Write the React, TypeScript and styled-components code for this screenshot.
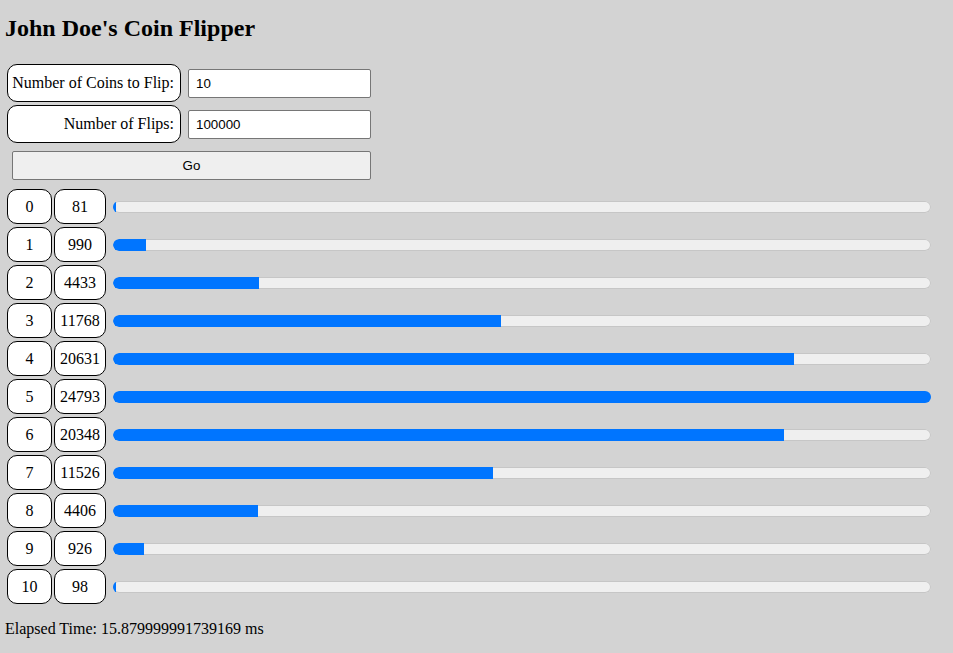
import React from "react";
import styled, { createGlobalStyle } from "styled-components";

const Global = createGlobalStyle`
  html, body { margin: 0; padding: 0; background: #d3d3d3; }
  body { font-family: "Liberation Serif", "Times New Roman", serif; color: #000; }
`;

const Page = styled.div`
  padding: 0 5px;
`;

const Title = styled.h2`
  margin: 14px 0 22px 0;
  font-size: 24px;
  line-height: 28px;
  font-weight: bold;
`;

const Form = styled.div`
  display: flex;
  flex-direction: column;
  gap: 3px;
  padding-left: 2px;
`;

const FormRow = styled.div`
  display: flex;
  align-items: center;
  gap: 7px;
`;

const FieldLabel = styled.label`
  box-sizing: border-box;
  width: 174px;
  height: 38px;
  display: flex;
  align-items: center;
  justify-content: flex-end;
  padding: 0 6px;
  background: #fff;
  border: 1px solid #000;
  border-radius: 10px;
  font-size: 16px;
  white-space: nowrap;
`;

const Input = styled.input`
  box-sizing: border-box;
  width: 183px;
  height: 29px;
  padding: 0 7px;
  border: 1px solid #767676;
  border-radius: 2px;
  background: #fff;
  font-family: "Liberation Sans", Arial, sans-serif;
  font-size: 13.33px;
  color: #000;
`;

const GoButton = styled.button`
  display: block;
  box-sizing: border-box;
  margin: 8px 0 0 7px;
  width: 359px;
  height: 29px;
  background: #efefef;
  border: 1px solid #767676;
  border-radius: 2px;
  font-family: "Liberation Sans", Arial, sans-serif;
  font-size: 13.33px;
  color: #000;
`;

const Results = styled.div`
  margin-top: 9px;
  padding-left: 2px;
  display: flex;
  flex-direction: column;
  gap: 3px;
`;

const ResultRow = styled.div`
  display: flex;
  align-items: center;
  gap: 2px;
`;

const Cell = styled.div<{ $w: number }>`
  box-sizing: border-box;
  width: ${(p) => p.$w}px;
  height: 35px;
  display: flex;
  align-items: center;
  justify-content: center;
  background: #fff;
  border: 1px solid #000;
  border-radius: 10px;
  font-size: 16px;
`;

const Track = styled.div`
  margin-left: 5px;
  width: 818px;
  height: 12px;
  background: #efefef;
  box-shadow: inset 0 0 0 1px #c6c6c6;
  border-radius: 6px;
  overflow: hidden;
  display: flex;
`;

const Fill = styled.div`
  height: 100%;
  background: #0075ff;
  border-radius: 6px 0 0 6px;
`;

const Elapsed = styled.div`
  margin-top: 16px;
  font-size: 16px;
  line-height: 18px;
`;

const counts = [81, 990, 4433, 11768, 20631, 24793, 20348, 11526, 4406, 926, 98];
const max = Math.max(...counts);

export default function App() {
  return (
    <>
      <Global />
      <Page>
        <Title>John Doe's Coin Flipper</Title>
        <Form>
          <FormRow>
            <FieldLabel htmlFor="coins">Number of Coins to Flip:</FieldLabel>
            <Input id="coins" defaultValue="10" />
          </FormRow>
          <FormRow>
            <FieldLabel htmlFor="flips">Number of Flips:</FieldLabel>
            <Input id="flips" defaultValue="100000" />
          </FormRow>
        </Form>
        <GoButton>Go</GoButton>
        <Results>
          {counts.map((c, i) => (
            <ResultRow key={i}>
              <Cell $w={45}>{i}</Cell>
              <Cell $w={52}>{c}</Cell>
              <Track>
                <Fill style={{ width: `${(c / max) * 100}%` }} />
              </Track>
            </ResultRow>
          ))}
        </Results>
        <Elapsed>Elapsed Time: 15.879999991739169 ms</Elapsed>
      </Page>
    </>
  );
}
